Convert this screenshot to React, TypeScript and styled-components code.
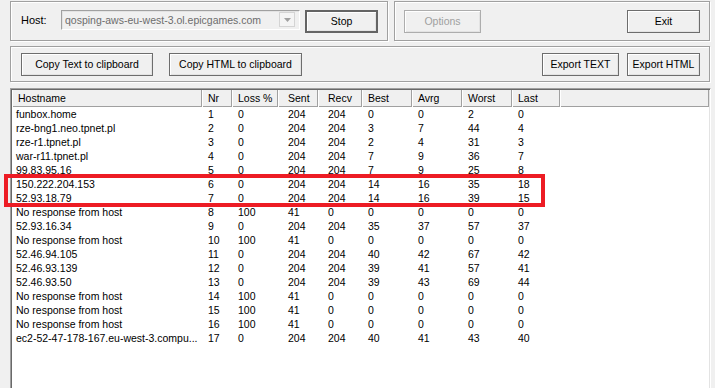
import React from "react";
import styled, { createGlobalStyle } from "styled-components";

const GlobalStyle = createGlobalStyle`
  html, body {
    margin: 0;
    padding: 0;
    background: #f0f0f0;
    overflow: hidden;
  }
  body {
    font-family: "Liberation Sans", Arial, sans-serif;
    font-size: 11px;
    color: #000;
  }
`;

type Column = { key: string; title: string; width: number; pad: number };

const columns: Column[] = [
  { key: "host", title: "Hostname", width: 190, pad: 4 },
  { key: "nr", title: "Nr", width: 30, pad: 6 },
  { key: "loss", title: "Loss %", width: 46, pad: 6 },
  { key: "sent", title: "Sent", width: 40, pad: 10 },
  { key: "recv", title: "Recv", width: 44, pad: 10 },
  { key: "best", title: "Best", width: 50, pad: 6 },
  { key: "avrg", title: "Avrg", width: 50, pad: 6 },
  { key: "worst", title: "Worst", width: 50, pad: 6 },
  { key: "last", title: "Last", width: 48, pad: 6 },
];

const NO_RESP = "No response from host";

// last hostname is shown already clipped by the list view
const rows: (string | number)[][] = [
  ["funbox.home", 1, 0, 204, 204, 0, 0, 2, 0],
  ["rze-bng1.neo.tpnet.pl", 2, 0, 204, 204, 3, 7, 44, 4],
  ["rze-r1.tpnet.pl", 3, 0, 204, 204, 2, 4, 31, 3],
  ["war-r11.tpnet.pl", 4, 0, 204, 204, 7, 9, 36, 7],
  ["99.83.95.16", 5, 0, 204, 204, 7, 9, 25, 8],
  ["150.222.204.153", 6, 0, 204, 204, 14, 16, 35, 18],
  ["52.93.18.79", 7, 0, 204, 204, 14, 16, 39, 15],
  [NO_RESP, 8, 100, 41, 0, 0, 0, 0, 0],
  ["52.93.16.34", 9, 0, 204, 204, 35, 37, 57, 37],
  [NO_RESP, 10, 100, 41, 0, 0, 0, 0, 0],
  ["52.46.94.105", 11, 0, 204, 204, 40, 42, 67, 42],
  ["52.46.93.139", 12, 0, 204, 204, 39, 41, 57, 41],
  ["52.46.93.50", 13, 0, 204, 204, 39, 43, 69, 44],
  [NO_RESP, 14, 100, 41, 0, 0, 0, 0, 0],
  [NO_RESP, 15, 100, 41, 0, 0, 0, 0, 0],
  [NO_RESP, 16, 100, 41, 0, 0, 0, 0, 0],
  ["ec2-52-47-178-167.eu-west-3.compu...", 17, 0, 204, 204, 40, 41, 43, 40],
];

export default function App() {
  return (
    <>
      <GlobalStyle />
      <Window>
        <TopRow>
          <GroupBox $width={378} $height={40}>
            <HostLabel>Host:</HostLabel>
            <Combo>
              <ComboText>qosping-aws-eu-west-3.ol.epicgames.com</ComboText>
              <ComboArrow>
                <svg width="7" height="4" viewBox="0 0 7 4">
                  <path d="M0 0 H7 L3.5 4 Z" fill="#a0a0a0" />
                </svg>
              </ComboArrow>
            </Combo>
            <Button $width={75} $height={23} $default>Stop</Button>
          </GroupBox>
          <GroupBox $width={316} $height={40} $spread>
            <Button $width={77} $height={23} disabled>Options</Button>
            <Button $width={73} $height={23}>Exit</Button>
          </GroupBox>
        </TopRow>

        <GroupBox $width={700} $height={36} $spread $left={10}>
          <ButtonGroup $gap={16}>
            <Button $width={132} $height={23}>Copy Text to clipboard</Button>
            <Button $width={133} $height={23}>Copy HTML to clipboard</Button>
          </ButtonGroup>
          <ButtonGroup $gap={8}>
            <Button $width={77} $height={23}>Export TEXT</Button>
            <Button $width={73} $height={23}>Export HTML</Button>
          </ButtonGroup>
        </GroupBox>

        <ListView>
          <HeaderRow>
            {columns.map((c, i) => (
              <HeaderCell key={c.key} $width={c.width} $pad={c.pad + (i === 0 ? 2 : 0)}>
                {c.title}
              </HeaderCell>
            ))}
            <HeaderFiller />
          </HeaderRow>
          {rows.map((r, ri) => (
            <Row key={ri}>
              {columns.map((c, ci) => (
                <Cell key={c.key} $width={c.width} $pad={c.pad}>
                  {r[ci]}
                </Cell>
              ))}
            </Row>
          ))}
        </ListView>

        <Highlight />
      </Window>
    </>
  );
}

const Window = styled.div`
  position: relative;
  width: 715px;
  height: 388px;
  overflow: hidden;
  display: flex;
  flex-direction: column;
  gap: 5px;
  padding: 1px 0 0 10px;
  box-sizing: border-box;
`;

const TopRow = styled.div`
  display: flex;
  gap: 6px;
  flex-shrink: 0;
`;

const GroupBox = styled.div<{ $width: number; $height: number; $spread?: boolean; $left?: number }>`
  width: ${({ $width }) => $width}px;
  height: ${({ $height }) => $height}px;
  flex-shrink: 0;
  box-sizing: border-box;
  border: 1px solid #a0a0a0;
  box-shadow: inset 1px 1px 0 #fff, 1px 1px 0 #fff;
  display: flex;
  align-items: center;
  justify-content: ${({ $spread }) => ($spread ? "space-between" : "flex-start")};
  padding: 0 9px 0 ${({ $left }) => $left ?? 9}px;
`;

const HostLabel = styled.span`
  margin: -2px 6px 0 1px;
  width: 35px;
`;

const Combo = styled.div`
  width: 246px;
  height: 20px;
  box-sizing: border-box;
  margin-top: -3px;
  margin-right: 5px;
  border: 1px solid;
  border-color: #a0a0a0 #fff #fff #a0a0a0;
  box-shadow: inset 1px 1px 0 #e3e3e3;
  background: #f0f0f0;
  display: flex;
  align-items: center;
  padding: 0 3px 0 3px;
`;

const ComboText = styled.span`
  flex: 1;
  color: #6d6d6d;
  white-space: nowrap;
  overflow: hidden;
  font-size: 10.5px;
`;

const ComboArrow = styled.div`
  width: 16px;
  height: 15px;
  box-sizing: border-box;
  border: 1px solid #d4d4d4;
  background: #f4f4f4;
  display: flex;
  align-items: center;
  justify-content: center;
  margin-right: 1px;
`;

const ButtonGroup = styled.div<{ $gap: number }>`
  display: flex;
  gap: ${({ $gap }) => $gap}px;
`;

const Button = styled.button<{ $width: number; $height: number; $default?: boolean }>`
  width: ${({ $width }) => $width}px;
  height: ${({ $height }) => $height}px;
  box-sizing: border-box;
  padding: 0;
  margin: 0;
  font-family: "Liberation Sans", Arial, sans-serif;
  font-size: 10.5px;
  color: #000;
  background: #f0f0f0;
  border: ${({ $default }) => ($default ? "2px solid #646464" : "1px solid #6d6d6d")};
  box-shadow: inset 1px 1px 0 #fff, inset -1px -1px 0 #e3e3e3;
  border-radius: 0;
  &:disabled {
    color: #a0a0a0;
    border-color: #adadad;
  }
`;

const ListView = styled.div`
  width: 701px;
  height: 310px;
  flex-shrink: 0;
  margin-top: 1px;
  box-sizing: border-box;
  background: #fff;
  border: 1px solid;
  border-color: #a0a0a0 #fff #fff #a0a0a0;
  box-shadow: inset 1px 1px 0 #696969, inset -1px -1px 0 #e3e3e3;
  padding: 1px 1px 0 1px;
  font-size: 10.5px;
`;

const HeaderRow = styled.div`
  display: flex;
  height: 17px;
  background: #f0f0f0;
  box-shadow: inset 0 -1px 0 #a0a0a0;
`;

const HeaderCell = styled.div<{ $width: number; $pad: number }>`
  width: ${({ $width }) => $width}px;
  flex-shrink: 0;
  box-sizing: border-box;
  padding-left: ${({ $pad }) => $pad}px;
  line-height: 16px;
  box-shadow: inset -1px 0 0 #a0a0a0, inset 1px 0 0 #fff, inset 0 -1px 0 #a0a0a0;
  white-space: nowrap;
`;

const HeaderFiller = styled.div`
  flex: 1;
  box-shadow: inset -1px 0 0 #a0a0a0, inset 1px 0 0 #fff, inset 0 -1px 0 #a0a0a0;
`;

const Row = styled.div`
  display: flex;
  height: 14px;
`;

const Cell = styled.div<{ $width: number; $pad: number }>`
  width: ${({ $width }) => $width}px;
  flex-shrink: 0;
  box-sizing: border-box;
  padding: 0 2px 0 ${({ $pad }) => $pad}px;
  line-height: 14px;
  white-space: nowrap;
  overflow: hidden;
`;

const Highlight = styled.div`
  position: absolute;
  left: 4px;
  top: 174px;
  width: 541px;
  height: 33px;
  box-sizing: border-box;
  border: 4px solid #ed1c24;
  pointer-events: none;
`;
